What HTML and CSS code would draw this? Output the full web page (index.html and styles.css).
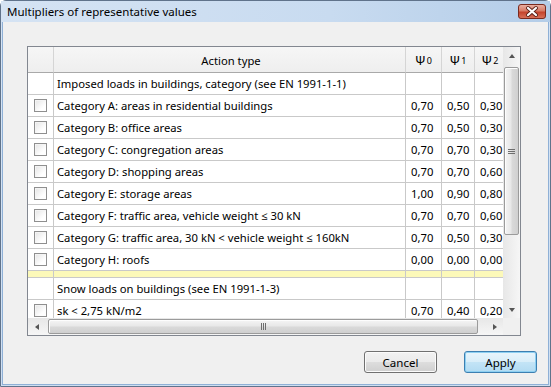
FILE: index.html
```html
<!DOCTYPE html>
<html lang="en">
<head>
    <meta charset="UTF-8">
    <title>Multipliers of representative values</title>
    <link rel="stylesheet" href="styles.css">
</head>
<body>
    <div class="window">
        <div class="titlebar">
            <span class="title">Multipliers of representative values</span>
            <div class="close">
                <svg width="28" height="15" viewBox="0 0 28 15">
                    <defs>
                        <linearGradient id="red" x1="0" y1="0" x2="0" y2="1">
                            <stop offset="0" stop-color="#eab3a6"/>
                            <stop offset="0.45" stop-color="#d77b66"/>
                            <stop offset="0.55" stop-color="#c4432c"/>
                            <stop offset="1" stop-color="#d9735b"/>
                        </linearGradient>
                    </defs>
                    <rect x="0.5" y="0.5" width="27" height="14" rx="2.5" fill="url(#red)" stroke="#7a2a1e"/>
                    <path d="M10 4 L18 11 M18 4 L10 11" stroke="#5b2118" stroke-width="4" stroke-linecap="round"/>
                    <path d="M10 4 L18 11 M18 4 L10 11" stroke="#ffffff" stroke-width="2.2" stroke-linecap="round"/>
                </svg>
            </div>
        </div>
        <div class="client">
            <div class="gridbox">
                <div class="viewport">
                    <div class="row head">
                        <div class="cell chk"></div>
                        <div class="cell name">Action type</div>
                        <div class="cell val"><span class="psi">&Psi;</span><sub>0</sub></div>
                        <div class="cell val"><span class="psi">&Psi;</span><sub>1</sub></div>
                        <div class="cell val"><span class="psi">&Psi;</span><sub>2</sub></div>
                    </div>
                    <div class="row">
                        <div class="cell chk"></div>
                        <div class="cell name">Imposed loads in buildings, category (see EN 1991-1-1)</div>
                        <div class="cell num"></div>
                        <div class="cell num"></div>
                        <div class="cell num"></div>
                    </div>
                    <div class="row">
                        <div class="cell chk"><span class="box"></span></div>
                        <div class="cell name">Category A: areas in residential buildings</div>
                        <div class="cell num">0,70</div>
                        <div class="cell num">0,50</div>
                        <div class="cell num">0,30</div>
                    </div>
                    <div class="row">
                        <div class="cell chk"><span class="box"></span></div>
                        <div class="cell name">Category B: office areas</div>
                        <div class="cell num">0,70</div>
                        <div class="cell num">0,50</div>
                        <div class="cell num">0,30</div>
                    </div>
                    <div class="row">
                        <div class="cell chk"><span class="box"></span></div>
                        <div class="cell name">Category C: congregation areas</div>
                        <div class="cell num">0,70</div>
                        <div class="cell num">0,70</div>
                        <div class="cell num">0,30</div>
                    </div>
                    <div class="row">
                        <div class="cell chk"><span class="box"></span></div>
                        <div class="cell name">Category D: shopping areas</div>
                        <div class="cell num">0,70</div>
                        <div class="cell num">0,70</div>
                        <div class="cell num">0,60</div>
                    </div>
                    <div class="row">
                        <div class="cell chk"><span class="box"></span></div>
                        <div class="cell name">Category E: storage areas</div>
                        <div class="cell num">1,00</div>
                        <div class="cell num">0,90</div>
                        <div class="cell num">0,80</div>
                    </div>
                    <div class="row">
                        <div class="cell chk"><span class="box"></span></div>
                        <div class="cell name">Category F: traffic area, vehicle weight &le; 30 kN</div>
                        <div class="cell num">0,70</div>
                        <div class="cell num">0,70</div>
                        <div class="cell num">0,60</div>
                    </div>
                    <div class="row">
                        <div class="cell chk"><span class="box"></span></div>
                        <div class="cell name">Category G: traffic area, 30 kN &lt; vehicle weight &le; 160kN</div>
                        <div class="cell num">0,70</div>
                        <div class="cell num">0,50</div>
                        <div class="cell num">0,30</div>
                    </div>
                    <div class="row">
                        <div class="cell chk"><span class="box"></span></div>
                        <div class="cell name">Category H: roofs</div>
                        <div class="cell num">0,00</div>
                        <div class="cell num">0,00</div>
                        <div class="cell num">0,00</div>
                    </div>
                    <!-- separator between groups -->
                    <div class="row sep">
                        <div class="cell chk"></div>
                        <div class="cell name"></div>
                        <div class="cell num"></div>
                        <div class="cell num"></div>
                        <div class="cell num"></div>
                    </div>
                    <div class="row">
                        <div class="cell chk"></div>
                        <div class="cell name">Snow loads on buildings (see EN 1991-1-3)</div>
                        <div class="cell num"></div>
                        <div class="cell num"></div>
                        <div class="cell num"></div>
                    </div>
                    <div class="row">
                        <div class="cell chk"><span class="box"></span></div>
                        <div class="cell name">sk &lt; 2,75 kN/m2</div>
                        <div class="cell num">0,70</div>
                        <div class="cell num">0,40</div>
                        <div class="cell num">0,20</div>
                    </div>
                </div>
                <!-- vertical scrollbar -->
                <div class="vscroll">
                    <div class="arrow"><span class="tri tri-up"></span></div>
                    <div class="track">
                        <div class="thumb"><span class="grip"></span></div>
                    </div>
                    <div class="arrow"><span class="tri tri-down"></span></div>
                </div>
                <!-- horizontal scrollbar -->
                <div class="hscroll">
                    <div class="arrow"><span class="tri tri-left"></span></div>
                    <div class="track">
                        <div class="thumb"><span class="grip"></span></div>
                    </div>
                    <div class="arrow"><span class="tri tri-right"></span></div>
                </div>
                <div class="corner"></div>
            </div>
            <div class="footer">
                <button class="btn">Cancel</button>
                <button class="btn btn-default">Apply</button>
            </div>
        </div>
    </div>
</body>
</html>
```

FILE: styles.css
```css
body {
    margin: 0;
    font-family: "Noto Sans", "Open Sans", sans-serif;
    font-size: 11.25px;
    color: #000;
    background: #fff;
}

.window {
    width: 551px;
    height: 387px;
    box-sizing: border-box;
    display: flex;
    flex-direction: column;
    background: linear-gradient(#c2d7ee, #d6e4f4 30px, #cfdff1);
    border: 1px solid #60738b;
    border-radius: 6px 6px 0 0;
}

.titlebar {
    height: 21px;
    display: flex;
    align-items: center;
    padding-left: 6px;
    background: linear-gradient(to right, #d5e3f3, #c8dbf0 60%, #b4cde8);
}
.title {
    color: #000;
    font-size: 11.5px;
}
.close {
    align-self: flex-start;
    margin: 3px 4px 0 auto;
    height: 15px;
}
.close svg {
    display: block;
}

.client {
    flex: 1;
    margin: 0 1px 1px 1px;
    border: 1px solid #8fb0d6;
    border-top: none;
    background: #f0f0f0;
    display: flex;
    flex-direction: column;
}

/* grid with its scrollbars */
.gridbox {
    margin: 24px 0 0 24px;
    width: 492px;
    display: grid;
    grid-template-columns: 475px 17px;
    grid-template-rows: 271px 17px;
    border: 1px solid #828790;
    background: #fff;
}
.viewport {
    overflow: hidden;
}
.row {
    display: grid;
    grid-template-columns: 26px 352px 36px 33px 31px;
    width: 478px;
    height: 22px;
}
.cell {
    box-sizing: border-box;
    border-right: 1px solid #c9c9c9;
    border-bottom: 1px solid #c9c9c9;
    display: flex;
    align-items: center;
    white-space: nowrap;
    overflow: hidden;
}
.name {
    padding-left: 3px;
}
.num {
    padding-left: 5px;
}
.chk {
    justify-content: center;
    padding-right: 1px;
}
.box {
    width: 13px;
    height: 13px;
    box-sizing: border-box;
    border: 1px solid #8f8f8f;
    background: linear-gradient(135deg, #e4e4e4, #ffffff 70%);
    box-shadow: inset 1px 1px 0 #f4f4f4;
}

.head {
    height: 26px;
    background: linear-gradient(#f6f6f6, #eeeeee);
}
.head .cell {
    border-right-color: #d5d5d5;
    border-bottom-color: #a9a9a9;
    justify-content: center;
    padding-top: 1px;
}
.psi {
    font-size: 13px;
}
.head sub {
    font-size: 9px;
    vertical-align: -4px;
    margin-left: 1px;
}

.sep {
    height: 7px;
}
.sep .cell {
    background: #fcf9b9;
}

/* scrollbars */
.vscroll,
.hscroll {
    display: flex;
    background: linear-gradient(to right, #e7e7e7, #f6f6f6);
}
.vscroll {
    flex-direction: column;
}
.hscroll {
    background: linear-gradient(#e7e7e7, #f6f6f6);
}
.arrow {
    flex: 0 0 17px;
    display: flex;
    align-items: center;
    justify-content: center;
}
.track {
    flex: 1;
    display: flex;
}
.vscroll .track {
    padding: 3px 1px 0 1px;
    margin-bottom: 66px;
}
.hscroll .track {
    padding: 1px 8px 1px 3px;
}
.thumb {
    flex: 1;
    display: flex;
    align-items: center;
    justify-content: center;
    border: 1px solid #9b9b9b;
    border-radius: 2px;
    background: linear-gradient(to right, #f5f5f5, #e8e8e8 45%, #d9d9d9 55%, #d0d0d0);
    box-shadow: inset 1px 1px 0 #fdfdfd;
}
.hscroll .thumb {
    background: linear-gradient(#f5f5f5, #e8e8e8 45%, #d9d9d9 55%, #d0d0d0);
}
.vscroll .grip {
    width: 7px;
    height: 5px;
    background: repeating-linear-gradient(#6e6e6e 0 1px, transparent 1px 2px);
}
.hscroll .grip {
    width: 5px;
    height: 7px;
    background: repeating-linear-gradient(to right, #6e6e6e 0 1px, transparent 1px 2px);
}
.tri {
    width: 0;
    height: 0;
    border: 4px solid transparent;
}
.tri-up {
    border-top: none;
    border-bottom: 4px solid #555;
    border-width: 0 3.5px 4px 3.5px;
}
.tri-down {
    border-bottom: none;
    border-top: 4px solid #555;
    border-width: 4px 3.5px 0 3.5px;
}
.tri-left {
    border-left: none;
    border-right: 4px solid #555;
    border-width: 3.5px 4px 3.5px 0;
}
.tri-right {
    border-right: none;
    border-left: 4px solid #555;
    border-width: 3.5px 0 3.5px 4px;
}
.corner {
    background: #f0f0f0;
}

/* dialog buttons */
.footer {
    display: flex;
    justify-content: flex-end;
    gap: 27px;
    margin-top: 15px;
    padding-right: 11px;
}
.btn {
    width: 73px;
    height: 22px;
    padding: 0;
    font-family: inherit;
    font-size: 11.5px;
    color: #000;
    border: 1px solid #707070;
    border-radius: 3px;
    background: linear-gradient(#f2f2f2, #ebebeb 48%, #dddddd 52%, #cfcfcf);
    box-shadow: inset 0 0 0 1px #fbfbfb;
}
.btn-default {
    border-color: #3c7fb1;
    background: linear-gradient(#e9f5fc, #d9eef9 48%, #c3e4f6 52%, #b2dbf2);
    box-shadow: inset 0 0 0 1px #8ed0f2;
}
```
